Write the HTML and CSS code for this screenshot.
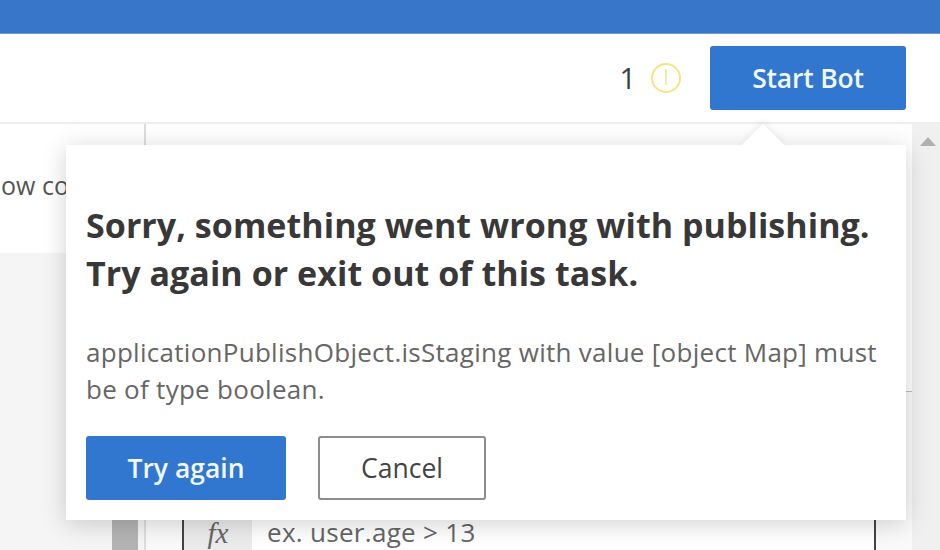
FILE: index.html
```html
<!DOCTYPE html>
<html lang="en">
<head>
  <meta charset="UTF-8" />
  <title>Start Bot</title>
  <link rel="stylesheet" href="styles.css">
</head>
<body>
  <div class="topbar"></div>

  <div class="toolbar">
    <span class="warn-count">1</span>
    <svg class="warn-icon" width="32" height="32" viewBox="0 0 32 32" fill="none">
      <circle cx="16" cy="16" r="14" stroke="#f7e284" stroke-width="2" />
      <line x1="16" y1="7" x2="16" y2="23" stroke="#f2d978" stroke-width="1.2" />
    </svg>
    <button type="button" class="btn btn-primary btn-start">Start Bot</button>
  </div>

  <div class="workspace">
    <!-- Left pane -->
    <div class="left-pane">
      <div class="left-row">ow co</div>
      <div class="left-rest">
        <div class="left-thumb"></div>
      </div>
    </div>

    <!-- Main pane -->
    <div class="main-pane">
      <div class="main-content">
        <div class="main-top"></div>
        <div class="main-bottom">
          <div class="expr-input">
            <span class="expr-fx">fx</span>
            <span class="expr-text">ex. user.age &gt; 13</span>
          </div>
        </div>
      </div>
      <div class="scrollbar">
        <div class="scroll-up"></div>
      </div>
    </div>
  </div>

  <!-- Publish error popover -->
  <div class="popover">
    <div class="popover-arrow"></div>
    <h2>Sorry, something went wrong with publishing.<br>Try again or exit out of this task.</h2>
    <p>applicationPublishObject.isStaging with value [object Map] must be of type boolean.</p>
    <div class="popover-actions">
      <button type="button" class="btn btn-primary btn-retry">Try again</button>
      <button type="button" class="btn btn-cancel">Cancel</button>
    </div>
  </div>
</body>
</html>
```

FILE: styles.css
```css
* {
  box-sizing: border-box;
}

body {
  margin: 0;
  height: 550px;
  overflow: hidden;
  font-family: "Open Sans", "Noto Sans", Arial, sans-serif;
  background: white;
  color: #333;
  display: flex;
  flex-direction: column;
}

.topbar {
  height: 34px;
  background: #3776c9;
  border-bottom: 1px solid #6a9bdc;
}

.toolbar {
  height: 90px;
  padding: 12px 34px 13px 0;
  display: flex;
  align-items: center;
  justify-content: flex-end;
  border-bottom: 2px solid #eeeeee;
}

.warn-count {
  font-size: 29px;
  color: #3c3c3c;
  margin-right: 14px;
}

.warn-icon {
  margin-right: 28px;
}

.btn {
  font-family: inherit;
  font-size: 26.5px;
  line-height: 60px;
  font-weight: 600;
  border-radius: 3px;
  padding: 0;
}

.btn-primary {
  background: #3176cf;
  color: #f2f8ff;
  border: none;
}

.btn-start {
  width: 196px;
  height: 64px;
  letter-spacing: -0.2px;
}

.workspace {
  flex: 1;
  display: flex;
  min-height: 0;
}

.left-pane {
  width: 146px;
  display: flex;
  flex-direction: column;
  border-right: 2px solid #dddddd;
}

.left-row {
  height: 129px;
  padding: 44px 0 0 1px;
  font-size: 25px;
  color: #555;
  white-space: nowrap;
}

.left-rest {
  flex: 1;
  background: #f5f5f5;
  display: flex;
  justify-content: flex-end;
  padding-right: 6px;
}

.left-thumb {
  width: 26px;
  margin-top: 267px;
  background: #b4b4b4;
}

.main-pane {
  flex: 1;
  display: flex;
}

.main-content {
  flex: 1;
  display: flex;
  flex-direction: column;
}

.main-top {
  height: 268px;
  border-bottom: 1px solid #bbbbbb;
}

.main-bottom {
  flex: 1;
  display: flex;
  flex-direction: column;
  justify-content: flex-end;
  padding: 0 36px;
  background: #fafafa;
}

.expr-input {
  height: 30px;
  display: flex;
  background: white;
  border-left: 2px solid #444;
  border-right: 2px solid #444;
}

.expr-fx {
  width: 68px;
  text-align: center;
  background: #ececec;
  font-family: "Liberation Serif", serif;
  font-style: italic;
  font-size: 29px;
  line-height: 26px;
  color: #666;
}

.expr-text {
  margin-left: 15px;
  font-size: 26px;
  line-height: 25px;
  letter-spacing: 0.3px;
  color: #666;
}

.scrollbar {
  width: 28px;
  background: #f0f0f0;
  display: flex;
  justify-content: center;
  padding: 13px 0 0 3px;
}

.scroll-up {
  width: 0;
  height: 0;
  border-left: 8px solid transparent;
  border-right: 8px solid transparent;
  border-bottom: 9px solid #b0b0b0;
}

.popover {
  position: absolute;
  left: 66px;
  top: 145px;
  width: 840px;
  height: 375px;
  padding: 56px 20px 20px;
  background: white;
  box-shadow: 0 4px 24px rgba(0, 0, 0, 0.18);
}

.popover-arrow {
  position: absolute;
  left: 682px;
  top: -15px;
  width: 30px;
  height: 30px;
  background: white;
  transform: rotate(45deg);
  box-shadow: -3px -3px 6px rgba(0, 0, 0, 0.05);
}

.popover h2 {
  position: relative;
  margin: 0 0 37px;
  font-size: 34px;
  line-height: 48px;
  font-weight: 700;
  letter-spacing: 0.05px;
  color: #383838;
  white-space: nowrap;
}

.popover p {
  margin: 0 0 28px;
  font-size: 26px;
  line-height: 37px;
  letter-spacing: 0.28px;
  color: #666;
}

.popover-actions {
  display: flex;
  gap: 32px;
}

.btn-retry {
  width: 200px;
  height: 64px;
}

.btn-cancel {
  width: 168px;
  height: 64px;
  background: white;
  color: #444;
  border: 2px solid #8c8c8c;
  font-weight: 400;
}
```
